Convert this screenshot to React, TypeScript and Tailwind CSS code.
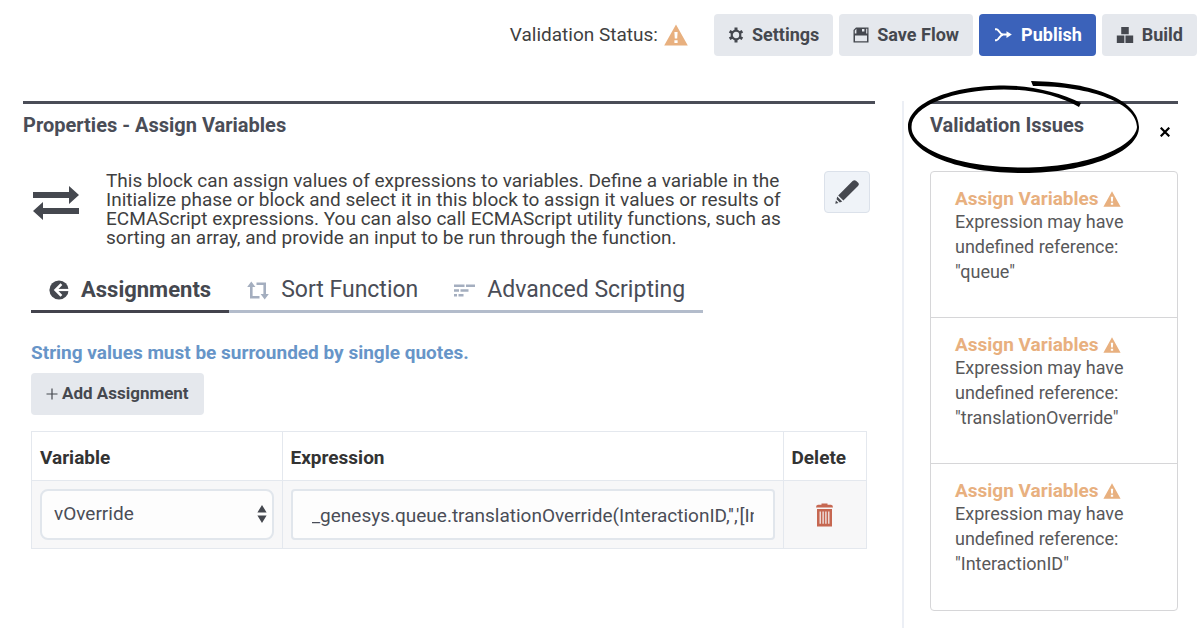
import React, { useState } from 'react';

const issues = [
  { block: 'Assign Variables', reference: 'queue' },
  { block: 'Assign Variables', reference: 'translationOverride' },
  { block: 'Assign Variables', reference: 'InteractionID' },
];

const WarningIcon = ({ className }: { className: string }) => (
  <svg viewBox="0 0 24 22" className={className} fill="currentColor" aria-hidden="true">
    <path
      fillRule="evenodd"
      d="M12 0.5 L23.8 21.5 H0.2 Z M10.4 8 L10.8 14.6 H13.2 L13.6 8 Z M10.4 16.2 V19 H13.6 V16.2 Z"
    />
  </svg>
);

const GearIcon = () => (
  <svg viewBox="0 0 16 16" className="h-4 w-4" fill="none" stroke="currentColor" aria-hidden="true">
    <circle cx="8" cy="8" r="4.3" strokeWidth="2.2" />
    <path
      strokeWidth="3"
      d="M8 0.6 V3.6 M8 12.4 V15.4 M1.6 4.3 L4.2 5.8 M14.4 4.3 L11.8 5.8 M1.6 11.7 L4.2 10.2 M14.4 11.7 L11.8 10.2"
    />
  </svg>
);

const SaveIcon = () => (
  <svg viewBox="0 0 16 16" className="h-4 w-4" aria-hidden="true">
    <path
      fill="currentColor"
      fillRule="evenodd"
      d="M3 0.5 H15.5 V15.5 H0.5 V3 Z M3.4 1.8 L1.8 3.6 V6.6 H3.4 Z M13.2 1.8 V6.6 H14.3 V1.8 Z M9 2 H11.4 V4.4 H9 Z M2 8.6 V14.2 H14 V8.6 Z"
    />
  </svg>
);

const PublishIcon = () => (
  <svg viewBox="0 0 18 16" className="h-4 w-5" fill="none" stroke="currentColor" strokeWidth="2" aria-hidden="true">
    <path d="M1 2.2 H2.5 C5 2.2 5.5 7.5 9 7.5 H14" />
    <path d="M1 13.2 H2.5 C5 13.2 5.5 7.7 9 7.7" />
    <path d="M12.5 4.2 L17.8 7.6 L12.5 11 Z" fill="currentColor" stroke="none" />
  </svg>
);

const BuildIcon = () => (
  <svg viewBox="0 0 18 17" className="h-4 w-[18px]" fill="currentColor" aria-hidden="true">
    <path d="M5 0 H13 V7.6 H5 Z M0.3 9 H8.3 V17 H0.3 Z M9.5 9 H17.7 V17 H9.5 Z" />
  </svg>
);

const SwapIcon = () => (
  <svg viewBox="0 0 46 34" className="h-[34px] w-[46px]" fill="currentColor" aria-hidden="true">
    <path d="M0 6 H36 V0 L46 9 L36 18 V12 H0 Z M46 22 H10 V16 L0 25 L10 34 V28 H46 Z" />
  </svg>
);

const PencilIcon = () => (
  <svg viewBox="0 0 24 24" className="h-6 w-6" fill="currentColor" aria-hidden="true">
    <path d="M17.6 1 Q19.4 -0.6 21 0.8 L23.2 2.8 Q24.6 4.4 23 6 L8.4 20.6 L3.2 15.4 Z" />
    <path d="M2.2 16.6 L7.2 21.6 L4.8 22.4 L1.6 19.2 Z M0.9 20.6 L3.4 23 L0.3 23.7 Z" />
  </svg>
);

const AssignIcon = () => (
  <svg viewBox="0 0 20 20" className="h-5 w-5" aria-hidden="true">
    <circle cx="10" cy="10" r="9.6" fill="currentColor" />
    <path d="M12.4 4.2 L6.6 10 L12.4 15.8" fill="none" stroke="#fff" strokeWidth="2.6" />
    <path d="M7 10 H20" stroke="#fff" strokeWidth="2.2" />
  </svg>
);

const SortIcon = () => (
  <svg viewBox="0 0 22 19" className="h-[19px] w-[22px]" aria-hidden="true">
    <path d="M4.3 5 V16.3 H12.5 M9.5 2.7 H17.7 V14" fill="none" stroke="currentColor" strokeWidth="2.6" />
    <path d="M4.3 0.5 L8.4 6 H0.2 Z M17.7 18.5 L21.8 13 H13.6 Z" fill="currentColor" />
  </svg>
);

const ScriptIcon = () => (
  <svg viewBox="0 0 21 13" className="h-[13px] w-[21px]" fill="currentColor" aria-hidden="true">
    <path d="M0 0.5 H10.5 V3 H0 Z M12 0.5 H21 V3 H12 Z M0 5.2 H5 V7.7 H0 Z M6.5 5.2 H14.5 V7.7 H6.5 Z M0 10 H3 V12.5 H0 Z M4.5 10 H9.5 V12.5 H4.5 Z" />
  </svg>
);

const TrashIcon = () => (
  <svg viewBox="0 0 17 24" className="h-6 w-[17px]" aria-hidden="true">
    <path
      fill="currentColor"
      fillRule="evenodd"
      d="M5.5 1.8 V0.4 H11.5 V1.8 H15 Q17 1.8 17 4.4 H0 Q0 1.8 2 1.8 Z M1 6 H16 V23.4 H1 Z M3.6 8.6 V20.8 H4.8 V8.6 Z M6.5 8.6 V20.8 H7.7 V8.6 Z M9.3 8.6 V20.8 H10.5 V8.6 Z M12.2 8.6 V20.8 H13.4 V8.6 Z"
    />
  </svg>
);

// Hand drawn ring around the panel title
const MarkerRing = () => (
  <svg
    viewBox="0 0 232 92"
    className="pointer-events-none absolute -left-[22px] -top-[23px] h-[92px] w-[232px]"
    fill="#000"
    aria-hidden="true"
  >
    <path d="M171 26 L173 22 C152 11 122 4.500 96 4.500 C45 4.500 0 21 0 46 C0 71 48 92 115 92 C180 92 231 71 231 46 C231 20 188 1 123 0 L125 5 C185 5 229 23 229 46 C227 66 180 86.500 115 86.500 C50 86.500 3.500 68 3.500 46 C3.500 25 45 8.500 96 8.500 C125 8.500 152 15 171 26 Z" />
  </svg>
);

const tabs = [
  { label: 'Assignments', icon: <AssignIcon /> },
  { label: 'Sort Function', icon: <SortIcon /> },
  { label: 'Advanced Scripting', icon: <ScriptIcon /> },
];

const Toolbar = () => (
  <header className="flex items-center justify-end gap-1.5 pr-[3px] pt-3.5 text-[#45484f]">
    <div className="mr-5 flex items-center gap-1.5 text-[19px] text-[#3f3f41]">
      <span>Validation Status:</span>
      <WarningIcon className="h-[22px] w-6 text-[#e8b07f]" />
    </div>
    <button className="flex h-[42px] items-center gap-2 rounded bg-[#e5e8ed] px-3.5 text-lg font-bold">
      <GearIcon />
      Settings
    </button>
    <button className="flex h-[42px] items-center gap-2 rounded bg-[#e5e8ed] px-3.5 text-lg font-bold">
      <SaveIcon />
      Save Flow
    </button>
    <button className="flex h-[42px] items-center gap-2 rounded bg-[#3b62ba] px-3.5 text-lg font-bold text-white">
      <PublishIcon />
      Publish
    </button>
    <button className="flex h-[42px] items-center gap-2 rounded bg-[#e5e8ed] px-3.5 text-lg font-bold">
      <BuildIcon />
      Build
    </button>
  </header>
);

const Properties = () => {
  const [active, setActive] = useState('Assignments');
  const [expression, setExpression] = useState("_genesys.queue.translationOverride(InteractionID,'','[InteractionID]')");

  return (
    <main className="mr-[27px] min-w-0 flex-1 border-t-3 border-[#4a4d57]">
      <h1 className="pt-[7px] text-xl font-bold leading-7 text-[#4a4d57]">Properties - Assign Variables</h1>

      <div className="mt-8 flex items-start pl-2.5 pr-[5px]">
        <div className="mt-[15px] text-[#45484f]">
          <SwapIcon />
        </div>
        <p className="ml-[27px] flex-1 text-[19px] leading-[19px] text-[#3f3f41]">
          This block can assign values of expressions to variables. Define a variable in the Initialize phase or block
          and select it in this block to assign it values or results of ECMAScript expressions. You can also call
          ECMAScript utility functions, such as sorting an array, and provide an input to be run through the function.
        </p>
        <button
          aria-label="Edit"
          className="ml-7 flex h-[42px] w-[46px] items-center justify-center rounded border border-[#dbe1ea] bg-[#eff3f8] text-[#45484f]"
        >
          <PencilIcon />
        </button>
      </div>

      <div className="px-2">
        <div role="tablist" className="mt-[27px] flex w-fit border-b-3 border-[#b3bccb] leading-8">
          {tabs.map((tab) => (
            <button
              key={tab.label}
              role="tab"
              aria-selected={active === tab.label}
              onClick={() => setActive(tab.label)}
              className={`-mb-[3px] flex items-center gap-3 border-b-3 px-[18px] pb-1 ${
                active === tab.label
                  ? 'border-[#43434d] text-[22px] font-bold text-[#45484f]'
                  : 'border-transparent text-[23px] text-[#4a4d57]'
              }`}
            >
              <span className={active === tab.label ? 'text-[#45484f]' : 'text-[#a4aebf]'}>{tab.icon}</span>
              {tab.label}
            </button>
          ))}
        </div>

        <p className="mt-[26px] text-[19px] font-bold leading-7 text-[#6795c8]">
          String values must be surrounded by single quotes.
        </p>
        <button className="mt-1.5 flex h-[42px] items-center gap-1 rounded bg-[#e5e8ed] px-[15px] text-[17px] font-bold text-[#45484f]">
          <svg viewBox="0 0 12 12" className="h-3 w-3" stroke="currentColor" strokeWidth="1.2" aria-hidden="true">
            <path d="M6 0.5 V11.5 M0.5 6 H11.5" />
          </svg>
          Add Assignment
        </button>

        <table className="mt-4 w-full border-collapse text-left text-[19px]">
          <thead>
            <tr className="h-[49px] text-[#333]">
              <th className="w-[30%] border border-[#e4e8ee] px-2 pt-1">Variable</th>
              <th className="border border-[#e4e8ee] px-2 pt-1">Expression</th>
              <th className="w-[10%] border border-[#e4e8ee] px-2 pt-1">Delete</th>
            </tr>
          </thead>
          <tbody>
            <tr className="h-[68px] bg-[#f7f7f8] text-[#4a4d57]">
              <td className="border border-[#e4e8ee] px-2">
                <div className="relative">
                  <select
                    aria-label="Variable"
                    className="h-[51px] w-full appearance-none rounded-lg border-2 border-[#e1e6ec] bg-[#fdfdfd] px-3"
                  >
                    <option>vOverride</option>
                  </select>
                  <svg
                    viewBox="0 0 10 18"
                    className="pointer-events-none absolute right-[7px] top-4 h-[18px] w-2.5"
                    fill="#45484f"
                    aria-hidden="true"
                  >
                    <path d="M5 0 L9.6 7.4 H0.4 Z M5 18 L9.6 10.6 H0.4 Z" />
                  </svg>
                </div>
              </td>
              <td className="border border-[#e4e8ee] px-2">
                <div className="flex h-[51px] items-center rounded border-2 border-[#e1e6ec] bg-[#fdfdfd] px-[19px]">
                  <input
                    aria-label="Expression"
                    value={expression}
                    onChange={(e) => setExpression(e.target.value)}
                    className="w-full bg-transparent pt-1 outline-none"
                  />
                </div>
              </td>
              <td className="border border-[#e4e8ee] px-2 text-center">
                <button aria-label="Delete assignment" className="align-middle text-[#c66751]">
                  <TrashIcon />
                </button>
              </td>
            </tr>
          </tbody>
        </table>
      </div>
    </main>
  );
};

const ValidationIssues = () => (
  <aside className="w-[276px] shrink-0 border-l-2 border-[#eceff5] pl-[26px]">
    <div className="relative flex items-start justify-between border-t-3 border-[#4a4d57] pt-[7px]">
      <h2 className="text-xl font-bold leading-7 text-[#4a4d57]">Validation Issues</h2>
      <button aria-label="Close" className="mr-2 mt-4 text-black">
        <svg viewBox="0 0 10 10" className="h-2.5 w-2.5" stroke="currentColor" strokeWidth="2.2" aria-hidden="true">
          <path d="M0.7 0.7 L9.3 9.3 M9.3 0.7 L0.7 9.3" />
        </svg>
      </button>
      <MarkerRing />
    </div>
    <ul className="mt-8 divide-y divide-[#d6d6d8] rounded-sm border border-[#d6d6d8]">
      {issues.map((issue) => (
        <li key={issue.reference} className="h-[146px] px-6 pt-4 text-lg leading-[25px] text-[#58585a]">
          <div className="flex items-center gap-1 text-[19px] font-bold leading-[21px] text-[#e8b07f]">
            {issue.block}
            <WarningIcon className="h-4 w-[18px]" />
          </div>
          <p>{`Expression may have undefined reference: "${issue.reference}"`}</p>
        </li>
      ))}
    </ul>
  </aside>
);

export default function App() {
  return (
    <div className="flex min-h-screen flex-col bg-white font-[Roboto,sans-serif]">
      <Toolbar />
      <div className="flex flex-1 pl-[23px] pr-[22px] pt-[45px]">
        <Properties />
        <ValidationIssues />
      </div>
    </div>
  );
}
